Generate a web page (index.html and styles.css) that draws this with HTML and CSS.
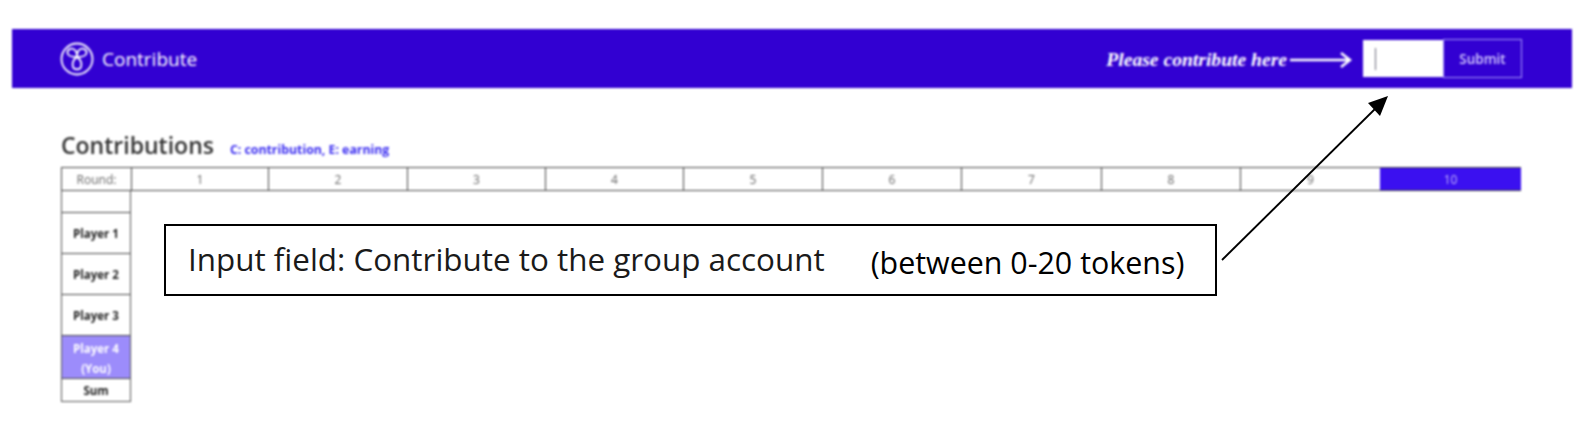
FILE: index.html
```html
<!DOCTYPE html>
<html lang="en">
<head>
  <meta charset="UTF-8" />
  <title>Contribute</title>
  <link rel="stylesheet" href="styles.css">
</head>
<body>
  <div class="page">
    <div class="shot">
      <div class="topbar">
        <div class="brand">
          <svg class="logo" width="34" height="34" viewBox="0 0 34 34" fill="none" stroke="#fff" stroke-width="1.8">
            <circle cx="17" cy="17" r="15.5"/>
            <path d="M17 15C14 15 8 15 7.500 11C7 7.500 11 6 13.500 7C16 8 17 11 17 15Z"/>
            <path d="M17 15C20 15 26 15 26.500 11C27 7.500 23 6 20.500 7C18 8 17 11 17 15Z"/>
            <path d="M17 15C13 18 12 22 13 25C14 28 20 28 21 25C22 22 21 18 17 15Z"/>
          </svg>
          <span class="brand-name">Contribute</span>
        </div>
        <div class="form">
          <span class="hint">Please contribute here</span>
          <svg class="hint-arrow" width="62" height="18" viewBox="0 0 62 18" fill="none" stroke="#fff" stroke-width="2.6">
            <path d="M0 9H59M51 2L60 9L51 16"/>
          </svg>
          <div class="amount"><span class="caret"></span></div>
          <div class="submit">Submit</div>
        </div>
      </div>

      <div class="section">
        <div class="heading">
          <h2>Contributions</h2>
          <span class="legend">C: contribution, E: earning</span>
        </div>
        <div class="rounds">
          <div class="cell label">Round:</div>
          <div class="cell">1</div>
          <div class="cell">2</div>
          <div class="cell">3</div>
          <div class="cell">4</div>
          <div class="cell">5</div>
          <div class="cell">6</div>
          <div class="cell">7</div>
          <div class="cell">8</div>
          <div class="cell">9</div>
          <div class="cell current">10</div>
        </div>
        <div class="players">
          <div class="player blank"></div>
          <div class="player">Player 1</div>
          <div class="player">Player 2</div>
          <div class="player">Player 3</div>
          <div class="player you">Player 4<br>(You)</div>
          <div class="player sum">Sum</div>
        </div>
      </div>
    </div>

    <div class="callout">
      <span class="callout-main">Input field: Contribute to the group account</span>
      <span class="callout-note">(between 0-20 tokens)</span>
    </div>

    <svg class="pointer" width="180" height="180" viewBox="0 0 180 180" fill="none">
      <path d="M3 177L158 24" stroke="#000" stroke-width="1.8"/>
      <path d="M169 13L161 33L149 20Z" fill="#000"/>
    </svg>
  </div>
</body>
</html>
```

FILE: styles.css
```css
body {
  margin: 0;
  background: white;
  font-family: "Open Sans", sans-serif;
}
.page {
  position: relative;
  width: 1581px;
  height: 422px;
  overflow: hidden;
}
.shot {
  padding: 29px 9px 0 12px;
  filter: blur(0.8px);
}
.topbar {
  display: flex;
  justify-content: space-between;
  align-items: center;
  height: 59px;
  padding: 0 50px 0 48px;
  background: #3200d2;
}
.brand {
  display: flex;
  align-items: center;
  gap: 8px;
  color: white;
  font-size: 19px;
}
.form {
  display: flex;
  align-items: center;
}
.hint {
  color: white;
  font-family: "Liberation Serif", serif;
  font-style: italic;
  font-weight: bold;
  font-size: 19.6px;
  margin-right: 3px;
  margin-top: 3px;
}
.hint-arrow {
  margin-right: 11px;
  margin-top: 3px;
}
.amount {
  display: flex;
  align-items: center;
  width: 80px;
  height: 37px;
  padding-left: 12px;
  box-sizing: border-box;
  background: white;
}
.caret {
  width: 1px;
  height: 22px;
  background: #6a6a7a;
}
.submit {
  display: flex;
  align-items: center;
  justify-content: center;
  width: 79px;
  height: 39px;
  box-sizing: border-box;
  border: 1px solid #a898f8;
  color: #d8ceff;
  font-size: 13.5px;
  font-weight: 600;
}
.section {
  margin-left: 49px;
  width: 1460px;
}
.heading {
  display: flex;
  align-items: baseline;
  gap: 16px;
  margin-top: 39px;
  height: 40px;
}
h2 {
  margin: 0;
  font-size: 23px;
  font-weight: 600;
  color: #333;
  line-height: 36px;
}
.legend {
  color: #3a2cf0;
  font-size: 12.300px;
  font-weight: 700;
}
.rounds {
  display: grid;
  grid-template-columns: 70px 137px 139px 138px 138px 139px 139px 140px 139px 140px 1fr;
  height: 24px;
  box-sizing: border-box;
  border-top: 1px solid #444;
  border-bottom: 1px solid #444;
}
.cell {
  display: flex;
  align-items: center;
  justify-content: center;
  border-left: 1px solid #444;
  color: #666;
  font-size: 12px;
}
.cell.current {
  background: #3b10f0;
  border-left: none;
  color: #c4b6fa;
}
.players {
  width: 70px;
  box-sizing: border-box;
  border: 1px solid #555;
  border-top: none;
  color: #222;
  font-size: 11.5px;
  font-weight: 700;
  text-align: center;
}
.player {
  display: flex;
  align-items: center;
  justify-content: center;
  height: 41px;
  padding-top: 1px;
  box-sizing: border-box;
  border-bottom: 1px solid #444;
}
.player.blank {
  height: 22px;
}
.player.you {
  height: 43px;
  padding-top: 3px;
  line-height: 20px;
  background: #9c8cfb;
  color: white;
}
.player.sum {
  height: 22px;
  padding-top: 0;
  border-bottom: none;
}
.callout {
  position: absolute;
  left: 164px;
  top: 224px;
  width: 1053px;
  height: 72px;
  box-sizing: border-box;
  border: 2px solid #000;
  background: white;
  padding-left: 22px;
  display: flex;
  align-items: center;
  color: #1a1a1a;
}
.callout-main {
  font-size: 31.4px;
  margin-top: -4px;
}
.callout-note {
  font-size: 30.4px;
  color: #000;
  margin-left: 46px;
  margin-top: 4px;
}
.pointer {
  position: absolute;
  left: 1219px;
  top: 83px;
}
```
